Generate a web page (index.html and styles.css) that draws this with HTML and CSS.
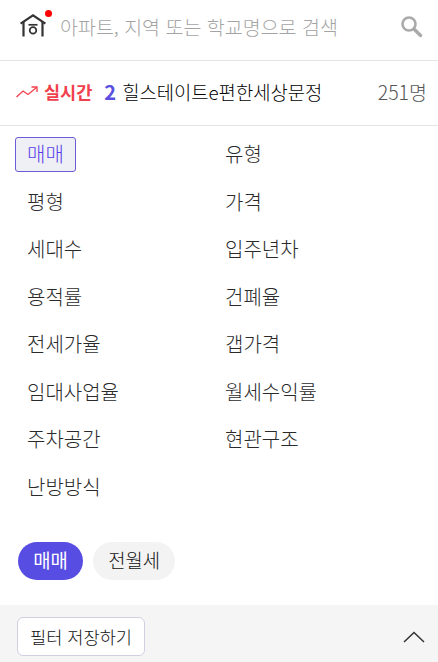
FILE: index.html
```html
<!DOCTYPE html>
<html lang="ko">
<head>
    <meta charset="UTF-8">
    <title>필터</title>
    <meta name="viewport" content="width=device-width, initial-scale=1.0">
    <link rel="stylesheet" href="styles.css">
</head>
<body>
    <header class="search-bar">
        <div class="logo">
            <svg width="26" height="23" viewBox="0 0 26 23" fill="none" stroke="#333" stroke-width="2.2">
                <path d="M0.6 9.6 L13 1.4 L25.4 9.6"/>
                <path d="M3.5 8 V22.5 M22.5 8 V22.5"/>
                <path d="M8.5 10.8 H17.5" stroke-width="1.7"/>
                <circle cx="13" cy="16.4" r="3.3" stroke-width="1.7"/>
            </svg>
            <span class="logo-dot"></span>
        </div>
        <div class="search-text">아파트, 지역 또는 학교명으로 검색</div>
        <svg class="search-icon" width="23" height="23" viewBox="0 0 23 23" fill="none" stroke="#aaa">
            <circle cx="9" cy="9" r="6.5" stroke-width="2.6"/>
            <path d="M14 14 L20.5 20.5" stroke-width="3.4" stroke-linecap="round"/>
        </svg>
    </header>

    <section class="ticker">
        <svg class="trend" width="22" height="12" viewBox="0 0 22 12" fill="none" stroke="#f0404c" stroke-width="1.3">
            <path d="M0.5 11 L7 5 L12 8.5 L20.5 1.5"/>
            <path d="M15.5 1 H21 V6"/>
        </svg>
        <span class="live">실시간</span>
        <span class="rank">2</span>
        <span class="apt">힐스테이트e편한세상문정</span>
        <span class="count">251명</span>
    </section>

    <ul class="filters">
        <li><span class="filter active">매매</span></li>
        <li><span class="filter">유형</span></li>
        <li><span class="filter">평형</span></li>
        <li><span class="filter">가격</span></li>
        <li><span class="filter">세대수</span></li>
        <li><span class="filter">입주년차</span></li>
        <li><span class="filter">용적률</span></li>
        <li><span class="filter">건폐율</span></li>
        <li><span class="filter">전세가율</span></li>
        <li><span class="filter">갭가격</span></li>
        <li><span class="filter">임대사업율</span></li>
        <li><span class="filter">월세수익률</span></li>
        <li><span class="filter">주차공간</span></li>
        <li><span class="filter">현관구조</span></li>
        <li><span class="filter">난방방식</span></li>
    </ul>

    <div class="chips">
        <span class="chip on">매매</span>
        <span class="chip">전월세</span>
    </div>

    <footer class="save-bar">
        <button class="save-btn">필터 저장하기</button>
        <svg class="chevron" width="24" height="12" viewBox="0 0 24 12" fill="none" stroke="#333" stroke-width="1.5">
            <path d="M2 11 L12 1.5 L22 11"/>
        </svg>
    </footer>
</body>
</html>
```

FILE: styles.css
```css
body {
    margin: 0;
    height: 662px;
    overflow: hidden;
    background: #fff;
    font-family: "Noto Sans CJK KR", "Noto Sans", sans-serif;
    font-weight: 300;
    color: #333;
}
.search-bar {
    height: 61px;
    box-sizing: border-box;
    border-bottom: 1px solid #e4e4e4;
    display: flex;
    align-items: center;
    padding: 0 15px 8px 20px;
}
.logo {
    position: relative;
    width: 40px;
    height: 24px;
}
.logo svg { display: block; }
.logo-dot {
    position: absolute;
    left: 25px;
    top: -4px;
    width: 7px;
    height: 7px;
    border-radius: 50%;
    background: #f00;
}
.search-text {
    flex: 1;
    font-size: 19.5px;
    color: #a4a4a4;
}
.ticker {
    height: 65px;
    box-sizing: border-box;
    border-bottom: 1px solid #e4e4e4;
    display: flex;
    align-items: center;
    padding: 0 11px 3px 16px;
}
.trend { margin-right: 6px; }
.live {
    color: #f0404c;
    font-weight: 700;
    font-size: 17.5px;
    margin-right: 12px;
}
.rank {
    color: #5a4fe0;
    font-weight: 700;
    font-size: 20px;
    margin-right: 6px;
}
.apt {
    flex: 1;
    color: #000;
    font-size: 18.8px;
}
.count {
    color: #555;
    font-size: 19.5px;
}
.filters {
    list-style: none;
    margin: 0;
    padding: 11px 0 0 15px;
    display: grid;
    grid-template-columns: 198px 1fr;
    grid-auto-rows: 47.5px;
}
.filter {
    display: inline-block;
    box-sizing: border-box;
    height: 35px;
    line-height: 31px;
    padding: 0 11px;
    border: 1px solid transparent;
    font-size: 20px;
    color: #2a2a2a;
}
.filter.active {
    color: #5a3fe8;
    background: #eff0f5;
    border-color: #6a5cd6;
    border-radius: 3px;
}
.chips {
    display: flex;
    gap: 10px;
    padding: 25px 0 0 18px;
}
.chip {
    height: 38px;
    line-height: 36px;
    padding: 0 15.2px;
    border-radius: 19px;
    background: #f3f3f3;
    color: #111;
    font-size: 18.8px;
}
.chip.on {
    background: #584de2;
    color: #fff;
    font-weight: 400;
}
.save-bar {
    margin-top: 25px;
    height: 57px;
    background: #f5f5f5;
    display: flex;
    align-items: flex-start;
    justify-content: space-between;
    padding: 12px 12px 0 17px;
}
.save-btn {
    width: 128px;
    height: 39px;
    padding: 0;
    background: #fff;
    border: 1px solid #d2d0e0;
    border-radius: 6px;
    font-family: inherit;
    font-weight: 300;
    font-size: 17.6px;
    color: #111;
}
.chevron { margin-top: 14px; }
```
